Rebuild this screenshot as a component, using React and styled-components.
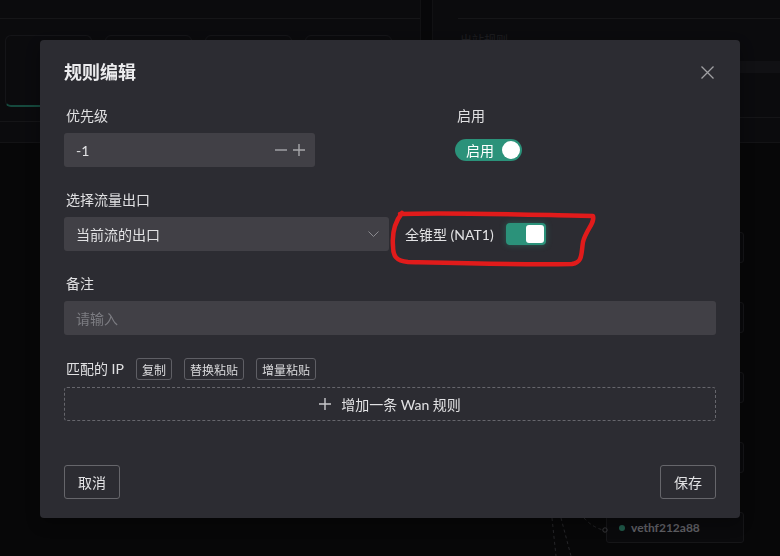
import React, { useState } from "react";
import styled, { createGlobalStyle } from "styled-components";

const GlobalStyle = createGlobalStyle`
  html, body {
    margin: 0;
    padding: 0;
    background: #0e0e10;
    font-family: Lato, "Noto Sans CJK SC", sans-serif;
  }
  * { box-sizing: border-box; }
`;

// ---------- background dashboard (dimmed by the mask) ----------

const Page = styled.div`
  width: 780px;
  height: 556px;
  display: flex;
  flex-direction: column;
  background: #0e0e10;
  overflow: hidden;
`;

const Top = styled.div`
  height: 143px;
  display: grid;
  grid-template-columns: 420px 13px 1fr;
  background: #16161b;
  border-bottom: 1px solid #26262b;
`;

const PanelHead = styled.div`
  height: 19px;
  border-bottom: 1px solid #2c2c31;
  margin-left: ${(p) => p.$inset || 0}px;
`;

const Cards = styled.div`
  display: flex;
  gap: 13px;
  padding: 16px 28px 0 5px;
  height: 89px;
`;

const Card = styled.div`
  width: 87px;
  height: 72px;
  border: 1px solid #2a2a30;
  border-radius: 6px;
  position: relative;
  overflow: hidden;
  border-bottom: ${(p) => (p.$active ? "2px solid #2b927a" : "1px solid #2a2a30")};
`;

const PanelLine = styled.div`
  border-top: 1px solid #2a2a2f;
  margin-top: 13px;
`;

const Divider = styled.div`
  background: #0f0f12;
  border-left: 1px solid #222226;
  border-right: 1px solid #222226;
`;

const RightPanel = styled.div`
  display: flex;
  flex-direction: column;
`;

const FaintTitle = styled.div`
  margin: 12px 0 0 27px;
  font-size: 12px;
  color: #3a3a40;
  height: 16px;
`;

const Band = styled.div`
  margin-top: 14px;
  height: 12px;
  background: #222228;
`;

const BandLine = styled.div`
  margin-top: 44px;
  border-top: 1px solid #2a2a2f;
`;

const Canvas = styled.div`
  flex: 1;
  position: relative;
  display: flex;
  justify-content: flex-end;
  padding: 89px 36px 0 0;
`;

const NodeColumn = styled.div`
  display: flex;
  flex-direction: column;
  gap: 39px;
  width: 138px;
`;

const Node = styled.div`
  height: 31px;
  border: 1px solid #2c2c31;
  border-radius: 3px;
  background: #141418;
  display: flex;
  align-items: center;
  gap: 6px;
  padding-left: 12px;
  font-size: 12px;
  font-weight: 700;
  color: #bdbdc6;
`;

const Dot = styled.span`
  width: 6px;
  height: 6px;
  border-radius: 50%;
  background: #3fb393;
`;

const Edges = styled.svg`
  position: absolute;
  left: 0;
  top: 0;
  width: 100%;
  height: 100%;
  pointer-events: none;
`;

// ---------- modal ----------

const Mask = styled.div`
  position: fixed;
  inset: 0;
  background: rgba(0, 0, 0, 0.5);
  display: flex;
  justify-content: center;
  align-items: flex-start;
  padding-top: 40px;
`;

const Modal = styled.div`
  position: relative;
  width: 700px;
  background: #2c2c32;
  border-radius: 4px;
  padding: 18px 24px 19px;
  box-shadow: 0 6px 16px rgba(0, 0, 0, 0.3);
  color: #e2e2e4;
`;

const Header = styled.div`
  display: flex;
  justify-content: space-between;
  align-items: center;
  height: 28px;
`;

const Title = styled.div`
  font-size: 18px;
  font-weight: 700;
  line-height: 28px;
  color: #ececee;
`;

const CloseBtn = styled.button`
  width: 16px;
  height: 16px;
  padding: 0;
  border: none;
  background: none;
  display: flex;
  align-items: center;
  justify-content: center;
  margin-right: 1px;
  cursor: pointer;
`;

const Form = styled.div`
  margin-top: 19px;
`;

const Row = styled.div`
  display: grid;
  grid-template-columns: ${(p) => p.$cols || "1fr"};
`;

const Item = styled.div`
  display: flex;
  flex-direction: column;
  padding-bottom: 22px;
`;

const Label = styled.div`
  font-size: 14px;
  line-height: 22px;
  height: ${(p) => p.$h || 22}px;
  padding-left: 2px;
  margin-bottom: 6px;
  color: #e0e0e2;
  display: flex;
  align-items: center;
  gap: 12px;
`;

const Control = styled.div`
  height: 34px;
  display: flex;
  align-items: center;
`;

const InputBox = styled.div`
  height: 34px;
  width: ${(p) => (p.$w ? `${p.$w}px` : "100%")};
  background: #414046;
  border-radius: 3px;
  display: flex;
  align-items: center;
  padding: 0 10px 0 12px;
  font-size: 14px;
  color: ${(p) => (p.$placeholder ? "#7c7c82" : "#e2e2e4")};
`;

const InputText = styled.span`
  flex: 1;
`;

const Steppers = styled.div`
  display: flex;
  gap: 6px;
  align-items: center;
`;

const Switch = styled.button`
  height: 22px;
  min-width: ${(p) => p.$w}px;
  border: none;
  padding: 0 2px 0 11px;
  border-radius: ${(p) => (p.$square ? "4px" : "11px")};
  background: #2b927a;
  display: flex;
  align-items: center;
  gap: 8px;
  font-family: inherit;
  font-size: 14px;
  color: #ffffff;
  cursor: pointer;
  box-shadow: ${(p) => (p.$glow ? "0 0 6px rgba(43, 146, 122, 0.45)" : "none")};
`;

const Knob = styled.span`
  width: 18px;
  height: 18px;
  margin-left: auto;
  border-radius: ${(p) => (p.$square ? "3px" : "50%")};
  background: #ffffff;
`;

const NatLabel = styled.span`
  font-size: 14px;
  color: #e2e2e4;
  margin: 0 12px 0 16px;
`;

const SmallBtn = styled.button`
  height: 22px;
  padding: 0 5px;
  border: 1px solid #5f5f65;
  border-radius: 3px;
  background: transparent;
  font-family: inherit;
  font-size: 12px;
  color: #dcdcde;
  cursor: pointer;
`;

const DashedAdd = styled.button`
  width: 100%;
  height: 34px;
  border: 1px dashed #66666c;
  border-radius: 3px;
  background: transparent;
  display: flex;
  align-items: center;
  justify-content: center;
  gap: 10px;
  font-family: inherit;
  font-size: 14px;
  color: #e2e2e4;
  cursor: pointer;
`;

const Footer = styled.div`
  display: flex;
  justify-content: space-between;
  margin-top: 22px;
`;

const FooterBtn = styled.button`
  height: 34px;
  padding: 0 13px;
  border: 1px solid #66666b;
  border-radius: 3px;
  background: transparent;
  font-family: inherit;
  font-size: 14px;
  color: #e2e2e4;
  cursor: pointer;
`;

const Scribble = styled.svg`
  position: absolute;
  left: 348px;
  top: 166px;
  width: 212px;
  height: 66px;
  pointer-events: none;
`;

const Minus = () => (
  <svg width="12" height="12" viewBox="0 0 12 12">
    <path d="M0 6h12" stroke="#a7a7ab" strokeWidth="1.4" />
  </svg>
);

const Plus = ({ color = "#a7a7ab" }) => (
  <svg width="12" height="12" viewBox="0 0 12 12">
    <path d="M0 6h12M6 0v12" stroke={color} strokeWidth="1.4" />
  </svg>
);

const Chevron = () => (
  <svg width="11" height="6" viewBox="0 0 11 6">
    <path d="M0.5 0.5l5 5 5-5" fill="none" stroke="#8a8a8f" strokeWidth="1" />
  </svg>
);

const CloseIcon = () => (
  <svg width="13" height="13" viewBox="0 0 13 13">
    <path d="M0.5 0.5l12 12M12.5 0.5l-12 12" stroke="#a0a0a4" strokeWidth="1.3" />
  </svg>
);

const nodes = ["eth0", "eth1", "wg0", "docker0", "vethf212a88"];

export default function App() {
  const [enabled, setEnabled] = useState(true);
  const [nat1, setNat1] = useState(true);

  return (
    <>
      <GlobalStyle />
      <Page>
        <Top>
          <div>
            <PanelHead />
            <Cards>
              <Card $active />
              <Card />
              <Card />
              <Card />
            </Cards>
            <PanelLine />
          </div>
          <Divider />
          <RightPanel>
            <PanelHead $inset={25} />
            <FaintTitle>出站规则</FaintTitle>
            <Band />
            <BandLine />
          </RightPanel>
        </Top>
        <Canvas>
          <Edges>
            <path d="M552 375 L556 413" stroke="#4a4a50" strokeDasharray="3 3" fill="none" />
            <path d="M561 375 L571 413" stroke="#4a4a50" strokeDasharray="3 3" fill="none" />
            <path d="M584 375 Q592 384 603 387" stroke="#4a4a50" strokeDasharray="3 3" fill="none" />
            <circle cx="605" cy="387" r="2.2" stroke="#6a6a70" fill="none" />
          </Edges>
          <NodeColumn>
            {nodes.map((n, i) => (
              <Node key={n}>
                {i === nodes.length - 1 && <Dot />}
                {n}
              </Node>
            ))}
          </NodeColumn>
        </Canvas>
      </Page>

      <Mask>
        <Modal>
          <Header>
            <Title>规则编辑</Title>
            <CloseBtn>
              <CloseIcon />
            </CloseBtn>
          </Header>

          <Form>
            <Row $cols="391px 1fr">
              <Item>
                <Label>优先级</Label>
                <Control>
                  <InputBox $w={251}>
                    <InputText>-1</InputText>
                    <Steppers>
                      <Minus />
                      <Plus />
                    </Steppers>
                  </InputBox>
                </Control>
              </Item>
              <Item>
                <Label>启用</Label>
                <Control>
                  <Switch $w={67} onClick={() => setEnabled(!enabled)}>
                    启用
                    <Knob />
                  </Switch>
                </Control>
              </Item>
            </Row>

            <Item>
              <Label>选择流量出口</Label>
              <Control>
                <InputBox $w={325}>
                  <InputText>当前流的出口</InputText>
                  <Chevron />
                </InputBox>
                <NatLabel>全锥型 (NAT1)</NatLabel>
                <Switch $w={40} $square $glow onClick={() => setNat1(!nat1)}>
                  <Knob $square />
                </Switch>
              </Control>
            </Item>

            <Item>
              <Label>备注</Label>
              <Control>
                <InputBox $placeholder>
                  <InputText>请输入</InputText>
                </InputBox>
              </Control>
            </Item>

            <Item>
              <Label $h={24}>
                <span>匹配的 IP</span>
                <SmallBtn>复制</SmallBtn>
                <SmallBtn>替换粘贴</SmallBtn>
                <SmallBtn>增量粘贴</SmallBtn>
              </Label>
              <DashedAdd>
                <Plus color="#c8c8cc" />
                增加一条 Wan 规则
              </DashedAdd>
            </Item>
          </Form>

          <Footer>
            <FooterBtn>取消</FooterBtn>
            <FooterBtn>保存</FooterBtn>
          </Footer>

          <Scribble viewBox="0 0 212 66">
            <path
              d="M12 8 C 60 6, 150 9, 205 10 C 207 17, 198 24, 195 36 C 193 48, 195 56, 184 58 C 130 59, 60 57, 20 56 C 8 55, 5 50, 5 40 C 4 28, 6 17, 14 7"
              fill="none"
              stroke="#e11b1b"
              strokeWidth="4.5"
              strokeLinecap="round"
              strokeLinejoin="round"
            />
          </Scribble>
        </Modal>
      </Mask>
    </>
  );
}
